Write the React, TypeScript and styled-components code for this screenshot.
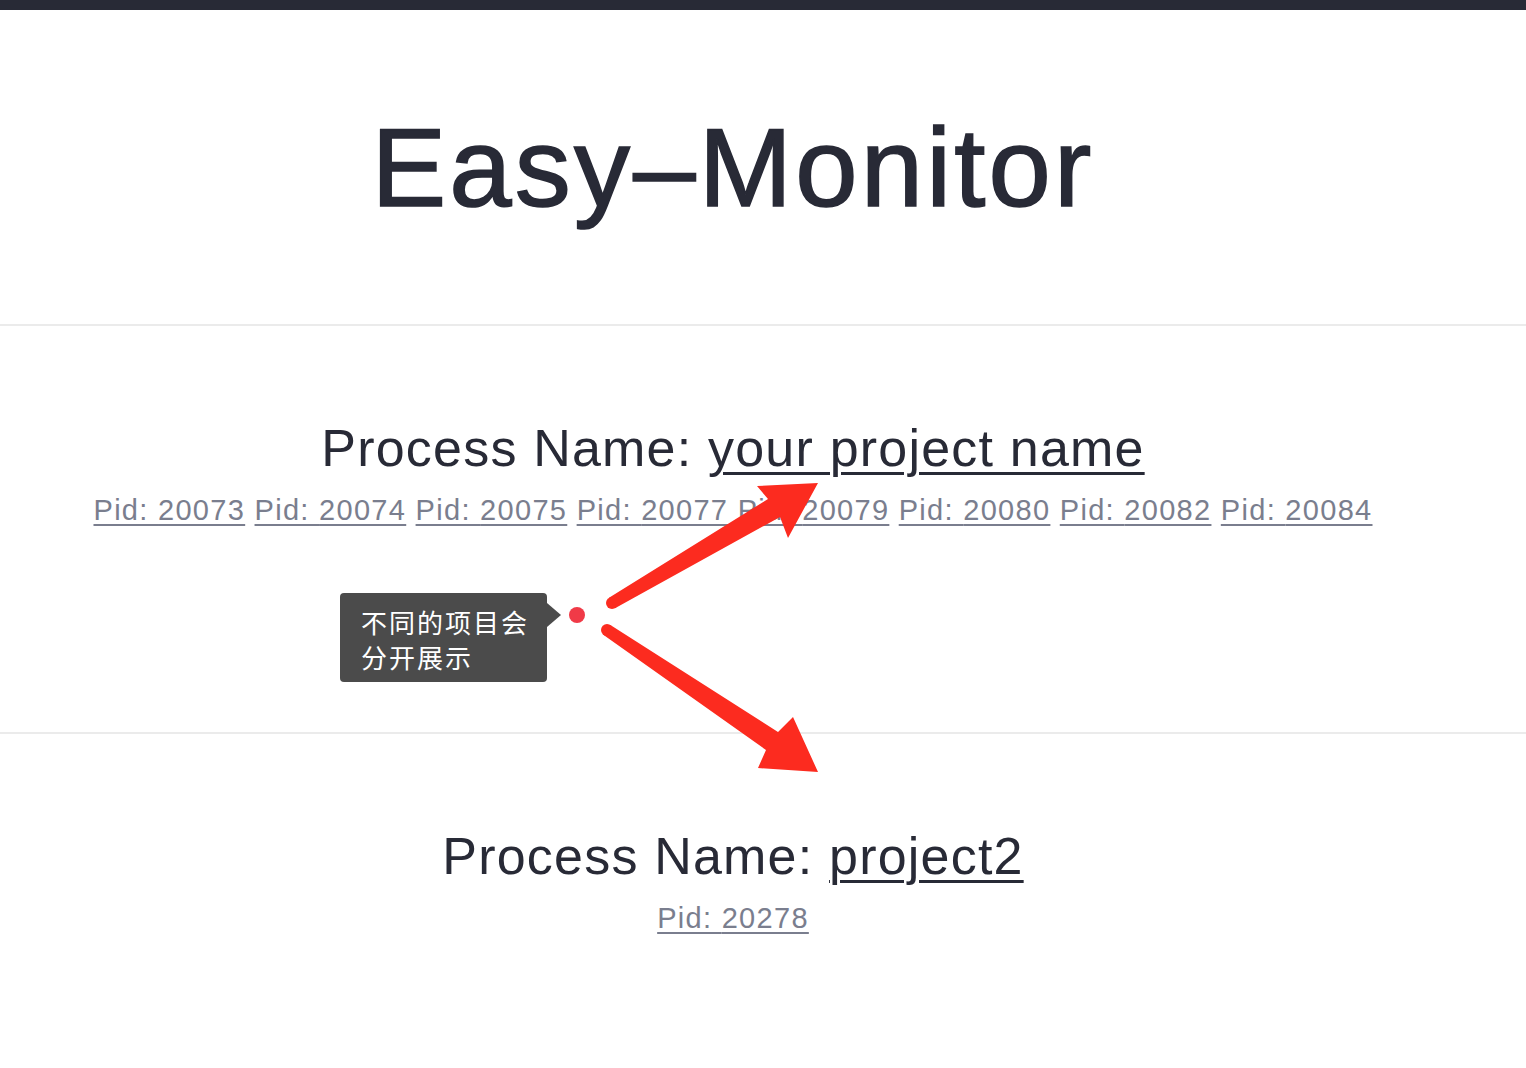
import React from "react";
import styled, { createGlobalStyle } from "styled-components";

const GlobalStyle = createGlobalStyle`
  html, body {
    margin: 0;
    padding: 0;
    background: #ffffff;
  }
  body {
    font-family: "Liberation Sans", "Noto Sans CJK SC", sans-serif;
    color: #282a36;
  }
`;

const Page = styled.div`
  position: relative;
  height: 1068px;
  overflow: hidden;
`;

const TopBar = styled.div`
  height: 10px;
  background: #282a36;
`;

const Header = styled.header`
  padding: 93px 60px 91px 0;
  border-bottom: 2px solid #ebebeb;
  text-align: center;
`;

const Title = styled.h1`
  margin: 0;
  font-size: 112px;
  line-height: 130px;
  font-weight: 400;
  letter-spacing: 3.2px;
  color: #282a36;
  -webkit-text-stroke: 1.6px #282a36;
`;

const Section = styled.section<{ last?: boolean }>`
  min-height: 408px;
  box-sizing: border-box;
  padding: 92px 60px 0 0;
  border-bottom: ${(props) => (props.last ? "none" : "2px solid #ebebeb")};
  text-align: center;
`;

const ProcessTitle = styled.h2`
  margin: 0;
  font-size: 52px;
  line-height: 60px;
  font-weight: 400;
  letter-spacing: 1.2px;
  color: #282a36;
`;

const ProcessLink = styled.a`
  color: #282a36;
  text-decoration: underline;
  text-decoration-thickness: 3px;
  text-underline-offset: 6px;
`;

const PidRow = styled.div`
  margin-top: 14px;
  font-size: 29px;
  line-height: 36px;
  letter-spacing: 1.3px;
`;

const PidLink = styled.a`
  color: #7a7e8e;
  text-decoration: underline;
  text-decoration-thickness: 2px;
  text-underline-offset: 4px;
`;

const Tooltip = styled.div`
  position: absolute;
  left: 340px;
  top: 593px;
  width: 207px;
  box-sizing: border-box;
  padding: 11px 8px 8px 21px;
  background: #4b4b4b;
  border-radius: 4px;
  color: #ffffff;
  font-family: "Noto Sans CJK SC", sans-serif;
  font-size: 26px;
  line-height: 35px;
  letter-spacing: 2px;

  &::after {
    content: "";
    position: absolute;
    right: -14px;
    top: 10px;
    border-top: 12px solid transparent;
    border-bottom: 12px solid transparent;
    border-left: 14px solid #4b4b4b;
  }
`;

const Overlay = styled.svg`
  position: absolute;
  left: 0;
  top: 0;
  pointer-events: none;
`;

interface Process {
  name: string;
  pids: number[];
}

const processes: Process[] = [
  {
    name: "your project name",
    pids: [20073, 20074, 20075, 20077, 20079, 20080, 20082, 20084],
  },
  { name: "project2", pids: [20278] },
];

const Annotation = () => (
  <>
    <Tooltip>
      不同的项目会
      <br />
      分开展示
    </Tooltip>
    <Overlay width="1526" height="1068" viewBox="0 0 1526 1068">
      <circle cx="577" cy="615" r="8" fill="#f03a47" />
      <g fill="#fc2b1f">
        <circle cx="612" cy="603" r="6" />
        <polygon points="609,597.8 768,499 757,486 818,483 788,538 780,517 615,608.2" />
        <circle cx="607" cy="630" r="6" />
        <polygon points="610.4,625 778,732 793,717 818,772 758,768 766,750 603.6,635" />
      </g>
    </Overlay>
  </>
);

export default function App() {
  return (
    <Page>
      <GlobalStyle />
      <TopBar />
      <Header>
        <Title>Easy–Monitor</Title>
      </Header>
      {processes.map((proc, index) => (
        <Section key={proc.name} last={index === processes.length - 1}>
          <ProcessTitle>
            Process Name: <ProcessLink href="#">{proc.name}</ProcessLink>
          </ProcessTitle>
          <PidRow>
            {proc.pids.map((pid, i) => (
              <React.Fragment key={pid}>
                {i > 0 && " "}
                <PidLink href="#">Pid: {pid}</PidLink>
              </React.Fragment>
            ))}
          </PidRow>
        </Section>
      ))}
      <Annotation />
    </Page>
  );
}
